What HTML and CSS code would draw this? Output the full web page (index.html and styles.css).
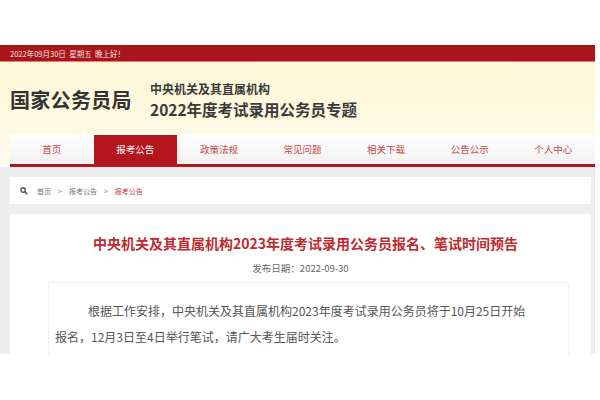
FILE: index.html
```html
<!DOCTYPE html>
<html lang="zh">
<head>
<meta charset="utf-8">
<link rel="stylesheet" href="styles.css">
</head>
<body>
<div class="page">
  <div class="topbar">2022年09月30日&nbsp;&nbsp;<span class="week">星期五</span>&nbsp;&nbsp;晚上好！</div>
  <div class="header">
    <div class="brand">
      <div class="logo">国家公务员局</div>
      <div class="subject">
        <div class="sub1">中央机关及其直属机构</div>
        <div class="sub2">2022年度考试录用公务员专题</div>
      </div>
    </div>
    <div class="nav">
      <a class="item">首页</a>
      <a class="item active">报考公告</a>
      <a class="item">政策法规</a>
      <a class="item">常见问题</a>
      <a class="item">相关下载</a>
      <a class="item">公告公示</a>
      <a class="item">个人中心</a>
    </div>
  </div>
  <div class="main">
    <div class="crumb">
      <svg class="search" width="8" height="8" viewBox="0 0 8 8"><circle cx="3" cy="3" r="2.2" fill="none" stroke="#555" stroke-width="1.4"/><path d="M4.6 4.6 L7.2 7.2" stroke="#555" stroke-width="1.6"/></svg>
      <span>首页</span><span class="sep">&gt;</span><span>报考公告</span><span class="sep">&gt;</span><span class="cur">报考公告</span>
    </div>
    <div class="article">
      <h1 class="title">中央机关及其直属机构2023年度考试录用公务员报名、笔试时间预告</h1>
      <div class="date">发布日期：2022-09-30</div>
      <div class="body">
        <p class="para">根据工作安排，中央机关及其直属机构2023年度考试录用公务员将于10月25日开始报名，12月3日至4日举行笔试，请广大考生届时关注。</p>
      </div>
    </div>
  </div>
</div>
</body>
</html>
```

FILE: styles.css
```css
* { box-sizing: border-box; margin: 0; padding: 0; }
body {
  margin: 0;
  background: #fff;
  font-family: "Noto Sans CJK SC", "Liberation Sans", sans-serif;
  width: 600px;
  height: 400px;
  overflow: hidden;
}
.page {
  width: 595px;
  padding-top: 45px;
}
.topbar {
  height: 17px;
  background: #a8161c;
  color: #fbe3e3;
  font-size: 7.5px;
  line-height: 17px;
  padding-left: 10px;
  border-bottom: 1px solid #d9857f;
}
.week { color: #f4dede; }
.header {
  background: linear-gradient(#fff7d6, #fffbec);
  padding-left: 10px;
}
.brand {
  height: 73px;
  display: flex;
  align-items: center;
}
.logo {
  font-size: 20px;
  font-weight: 700;
  color: #333;
  width: 140px;
  letter-spacing: 0.3px;
  padding-top: 2px;
}
.subject { padding-top: 2px; }
.sub1 {
  font-size: 12px;
  font-weight: 700;
  color: #3a3a3a;
  line-height: 18px;
}
.sub2 {
  font-size: 15.5px;
  font-weight: 700;
  color: #3a3a3a;
  line-height: 22px;
}
.nav {
  display: flex;
  height: 32px;
  background: linear-gradient(#ffffff, #f1f1f1);
  border-bottom: 3px solid #b4161e;
}
.item {
  flex: 1;
  text-align: center;
  font-size: 9.5px;
  line-height: 29px;
  color: #c4474a;
}
.item.active {
  background: #b4161e;
  color: #fff;
}
.main {
  background: #eeeeee;
  height: 187px;
  padding: 10px 3px 0 10px;
  overflow: hidden;
  border-right: 1px solid #e2e2e2;
}
.crumb {
  background: #fff;
  height: 27px;
  display: flex;
  align-items: center;
  padding-left: 10px;
  font-size: 7px;
  color: #777;
  gap: 7px;
}
.search { margin-right: 2px; }
.sep { color: #888; }
.cur { color: #d0393c; }
.article {
  background: #fff;
  margin-top: 10px;
  height: 150px;
  padding-top: 20px;
}
.title {
  font-size: 14px;
  font-weight: 700;
  color: #bf2a2f;
  text-align: center;
  line-height: 19px;
  padding-left: 10px;
}
.date {
  font-size: 9.5px;
  color: #666;
  text-align: center;
  margin-top: 9px;
  line-height: 12px;
  padding-left: 0;
}
.body {
  margin: 8px 22px 0 38px;
  border: 1px solid #efefef;
  height: 100px;
  padding: 15px 0 0 6px;
}
.para {
  width: 478px;
  font-size: 12px;
  line-height: 26px;
  color: #555;
  text-indent: 33px;
}
```
